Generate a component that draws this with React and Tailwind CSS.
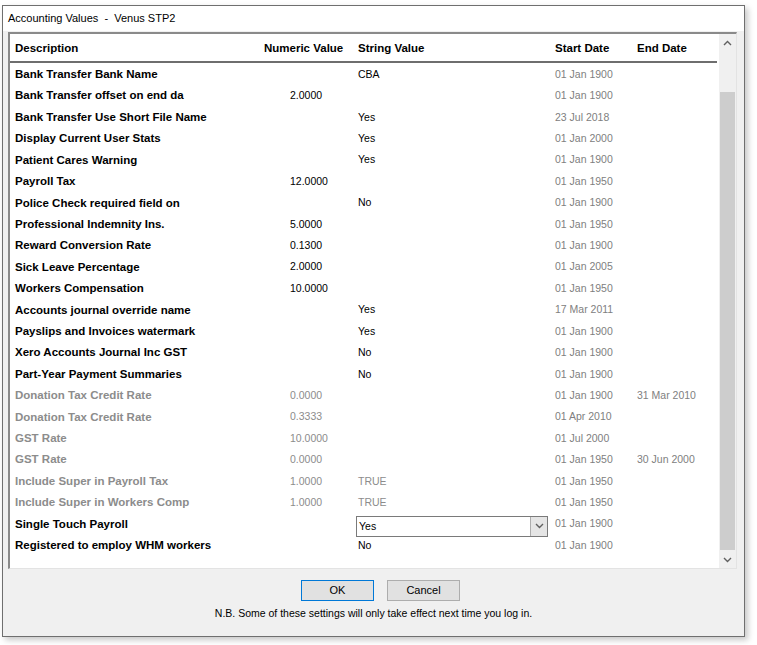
import React from 'react';

// Accounting values dialog: a legacy Windows property grid
const rows = [
  { desc: 'Bank Transfer Bank Name', str: 'CBA', start: '01 Jan 1900' },
  { desc: 'Bank Transfer offset on end da', num: '2.0000', start: '01 Jan 1900' },
  { desc: 'Bank Transfer Use Short File Name', str: 'Yes', start: '23 Jul 2018' },
  { desc: 'Display Current User Stats', str: 'Yes', start: '01 Jan 2000' },
  { desc: 'Patient Cares Warning', str: 'Yes', start: '01 Jan 1900' },
  { desc: 'Payroll Tax', num: '12.0000', start: '01 Jan 1950' },
  { desc: 'Police Check required field on', str: 'No', start: '01 Jan 1900' },
  { desc: 'Professional Indemnity Ins.', num: '5.0000', start: '01 Jan 1950' },
  { desc: 'Reward Conversion Rate', num: '0.1300', start: '01 Jan 1900' },
  { desc: 'Sick Leave Percentage', num: '2.0000', start: '01 Jan 2005' },
  { desc: 'Workers Compensation', num: '10.0000', start: '01 Jan 1950' },
  { desc: 'Accounts journal override name', str: 'Yes', start: '17 Mar 2011' },
  { desc: 'Payslips and Invoices watermark', str: 'Yes', start: '01 Jan 1900' },
  { desc: 'Xero Accounts Journal Inc GST', str: 'No', start: '01 Jan 1900' },
  { desc: 'Part-Year Payment Summaries', str: 'No', start: '01 Jan 1900' },
  { desc: 'Donation Tax Credit Rate', num: '0.0000', start: '01 Jan 1900', end: '31 Mar 2010', off: true },
  { desc: 'Donation Tax Credit Rate', num: '0.3333', start: '01 Apr 2010', off: true },
  { desc: 'GST Rate', num: '10.0000', start: '01 Jul 2000', off: true },
  { desc: 'GST Rate', num: '0.0000', start: '01 Jan 1950', end: '30 Jun 2000', off: true },
  { desc: 'Include Super in Payroll Tax', num: '1.0000', str: 'TRUE', start: '01 Jan 1950', off: true },
  { desc: 'Include Super in Workers Comp', num: '1.0000', str: 'TRUE', start: '01 Jan 1950', off: true },
  { desc: 'Single Touch Payroll', str: 'Yes', start: '01 Jan 1900', combo: true },
  { desc: 'Registered to employ WHM workers', str: 'No', start: '01 Jan 1900' },
];

const Chevron = ({ up, className }) => (
  <svg width="9" height="6" viewBox="0 0 9 6" className={className}>
    <path
      d={up ? 'M1 5 L4.5 1.5 L8 5' : 'M1 1 L4.5 4.5 L8 1'}
      fill="none"
      stroke="currentColor"
      strokeWidth="1.4"
    />
  </svg>
);

const GridRow = ({ row }) => {
  const tone = row.off ? 'text-[#8c8c8c]' : 'text-black';
  return (
    <div className="grid grid-cols-[254px_94px_197px_82px_1fr] h-[21.41px] items-center">
      <div className={`pl-[5px] font-bold text-[11.5px] whitespace-nowrap ${tone}`}>{row.desc}</div>
      <div className={`pl-[26px] text-[10.5px] ${tone}`}>{row.num}</div>
      <div className={`text-[10.5px] ${tone}`}>
        {row.combo ? (
          <div className="relative top-[2px] -ml-[2px] flex h-[21px] w-[192px] items-stretch border border-[#7a7a7a] bg-white">
            <span className="flex-1 pl-[2px] leading-[19px]">{row.str}</span>
            <span className="flex w-[17px] items-center justify-center border-l border-[#adadad] bg-[#e5e5e5] text-[#606060]">
              <Chevron />
            </span>
          </div>
        ) : (
          row.str
        )}
      </div>
      <div className="text-[10.5px] text-[#808080]">{row.start}</div>
      <div className="text-[10.5px] text-[#808080]">{row.end}</div>
    </div>
  );
};

export default function App() {
  return (
    <div
      className="w-[757px] h-[645px] bg-white pl-[2px] pt-[5px]"
      style={{ fontFamily: '"Liberation Sans", Arial, sans-serif' }}
    >
      <div className="flex h-[632px] w-[743px] flex-col border border-[#6f6f6f] bg-[#f0f0f0] shadow-[3px_3px_6px_rgba(0,0,0,0.22)]">
        {/* Title bar */}
        <div className="flex h-[25px] items-center bg-white pl-[5px] text-[11px] text-black whitespace-pre">
          {'Accounting Values  -  Venus STP2'}
        </div>

        {/* Grid panel */}
        <div className="ml-[5px] mt-[1px] flex h-[537px] w-[729px] border-l-2 border-t-2 border-b border-r border-l-[#8a8a8a] border-t-[#8a8a8a] border-b-[#e3e3e3] border-r-[#e3e3e3] bg-white">
          <div className="flex-1">
            <div className="grid h-[27px] grid-cols-[254px_94px_197px_82px_1fr] items-center pt-[2px] text-[11.5px] font-bold text-black">
              <div className="pl-[5px]">Description</div>
              <div>Numeric Value</div>
              <div>String Value</div>
              <div>Start Date</div>
              <div>End Date</div>
            </div>
            <div className="mr-[2px] h-[2px] bg-[#6e6e6e]" />
            <div className="pt-[1px]">
              {rows.map((row, i) => (
                <GridRow key={i} row={row} />
              ))}
            </div>
          </div>

          {/* Scrollbar */}
          <div className="flex w-[17px] flex-col bg-[#f0f0f0]">
            <div className="flex h-[17px] items-center justify-center text-[#606060]">
              <Chevron up />
            </div>
            <div className="flex-1 px-[1px] pt-[41px] pb-[1px]">
              <div className="h-full bg-[#cdcdcd]" />
            </div>
            <div className="flex h-[17px] items-center justify-center text-[#606060]">
              <Chevron />
            </div>
          </div>
        </div>

        {/* Buttons */}
        <div className="mt-[11px] flex gap-[13px] pl-[298px]">
          <button className="h-[21px] w-[73px] border border-[#0078d7] bg-[#e1e1e1] text-[11px] text-black">
            OK
          </button>
          <button className="h-[21px] w-[73px] border border-[#adadad] bg-[#e1e1e1] text-[11px] text-black">
            Cancel
          </button>
        </div>
        <div className="mt-[5px] text-center text-[10.5px] text-black">
          N.B. Some of these settings will only take effect next time you log in.
        </div>
      </div>
    </div>
  );
}
